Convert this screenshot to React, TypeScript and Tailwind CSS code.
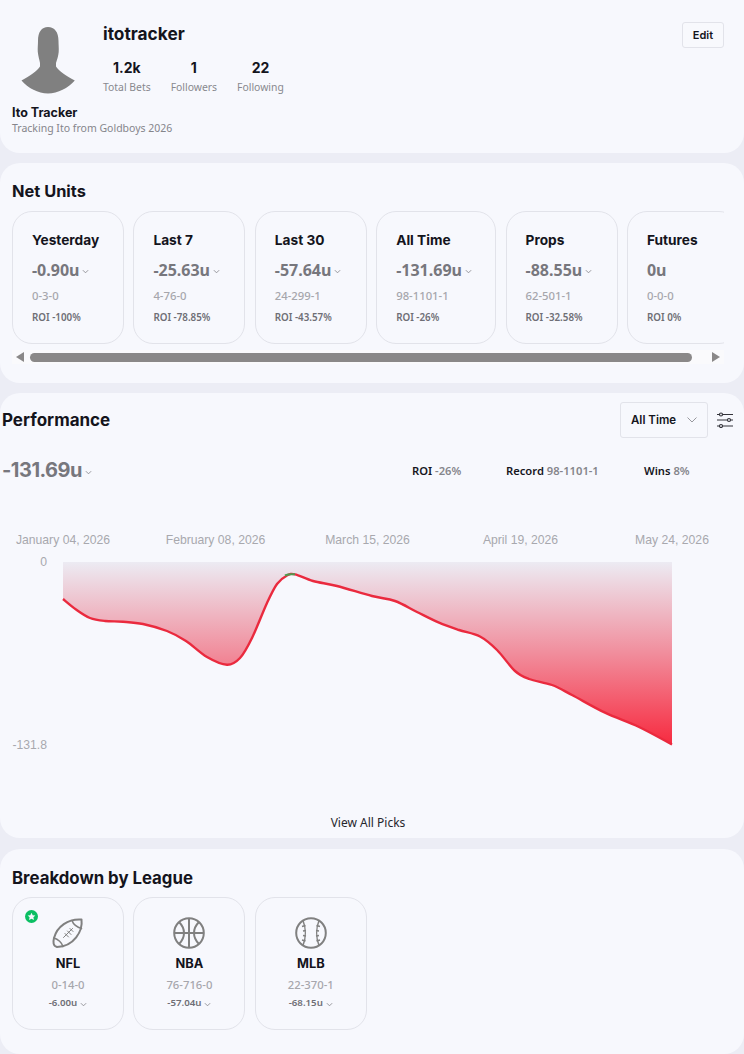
const heading = "font-['Inter',sans-serif] font-bold text-[#14141c]"
const body = "font-['Noto_Sans',sans-serif]"

const netUnits = [
  { label: 'Yesterday', value: '-0.90u', record: '0-3-0', roi: 'ROI -100%', w: 'w-[112px]', caret: true },
  { label: 'Last 7', value: '-25.63u', record: '4-76-0', roi: 'ROI -78.85%', w: 'w-[112px]', caret: true },
  { label: 'Last 30', value: '-57.64u', record: '24-299-1', roi: 'ROI -43.57%', w: 'w-[112px]', caret: true },
  { label: 'All Time', value: '-131.69u', record: '98-1101-1', roi: 'ROI -26%', w: 'w-[120px]', caret: true },
  { label: 'Props', value: '-88.55u', record: '62-501-1', roi: 'ROI -32.58%', w: 'w-[112px]', caret: true },
  { label: 'Futures', value: '0u', record: '0-0-0', roi: 'ROI 0%', w: 'w-[112px]', caret: false },
]

const points: [number, number][] = [
  [63, 599], [76, 609.500], [90, 618], [105, 621], [123, 621.700], [143, 624], [167, 631], [186, 641], [207, 657],
  [227, 664.700], [240, 658], [252, 638], [267, 603], [277, 584], [287, 575.500], [295, 574.300], [313, 581], [337, 586],
  [372, 596], [395, 601], [417, 612], [439, 622.700], [459, 630], [480, 636.500], [497, 650], [515, 671], [529, 679],
  [552, 685], [572, 695], [605, 712.700], [639, 727], [672, 744.500],
]

// catmull-rom through the traced points
function smoothLine(pts: [number, number][]) {
  let d = `M${pts[0][0]} ${pts[0][1]}`
  for (let i = 0; i < pts.length - 1; i++) {
    const p0 = pts[Math.max(i - 1, 0)]
    const p1 = pts[i]
    const p2 = pts[i + 1]
    const p3 = pts[Math.min(i + 2, pts.length - 1)]
    const c1x = p1[0] + (p2[0] - p0[0]) / 6
    const c1y = p1[1] + (p2[1] - p0[1]) / 6
    const c2x = p2[0] - (p3[0] - p1[0]) / 6
    const c2y = p2[1] - (p3[1] - p1[1]) / 6
    d += ` C${c1x} ${c1y} ${c2x} ${c2y} ${p2[0]} ${p2[1]}`
  }
  return d
}

function Caret({ className = '' }: { className?: string }) {
  return (
    <svg viewBox="0 0 8 5" className={`w-[7px] h-[5px] shrink-0 ${className}`} fill="none" stroke="#8a8a90" strokeWidth="1">
      <path d="M1 1l3 3 3-3" />
    </svg>
  )
}

function Avatar() {
  return (
    <svg viewBox="0 0 91 76" className="w-[91px] h-[76px] shrink-0" fill="#808080">
      <path d="M36 5C29.500 5 26 10 26 19C26 23 25.500 26 25.800 30C26.200 34 27.500 38 28 41L28 44.500C25 49 18 54 9.500 58.500C16 66 26 71.500 36 71.500C46 71.500 56 66 62.800 58.500C54 54 47 49 44 44.500L44 41C45 38 46.300 34 46.700 30C47 26 46.500 23 46.500 19C46.500 10 42.500 5 36 5Z" />
    </svg>
  )
}

function FootballIcon() {
  return (
    <svg viewBox="0 0 32 32" className="w-[32px] h-[32px]" fill="none" stroke="#808080" strokeWidth="2" strokeLinecap="round" strokeLinejoin="round">
      <path d="M29.500 2.500C31 14 22 29.500 5 30C1 29 1 25 2 21C5 9.500 16 1.500 29.500 2.500Z" />
      <path d="M20 3.500C21 7 25 10.500 29.500 11.500" strokeWidth="1.500" />
      <path d="M2 21C6 22 10 26 11 29.500" strokeWidth="1.500" />
      <path d="M11.500 20.500L20.500 11.500M13 16.500l3.500 3.500M15.500 14l3.500 3.500M18 11.500l3 3" strokeWidth="1" />
    </svg>
  )
}

function BasketballIcon() {
  return (
    <svg viewBox="0 0 32 32" className="w-[32px] h-[32px]" fill="none" stroke="#808080" strokeWidth="2">
      <circle cx="16" cy="16" r="14.800" />
      <path d="M16 1.200V30.800M1.200 16H30.800" />
      <path d="M6 5C10 9 11 12 11 16C11 20 10 23 6 27M26 5C22 9 21 12 21 16C21 20 22 23 26 27" />
    </svg>
  )
}

function BaseballIcon() {
  return (
    <svg viewBox="0 0 32 32" className="w-[32px] h-[32px]" fill="none" stroke="#808080" strokeWidth="2">
      <circle cx="16" cy="16" r="14.800" />
      <path d="M8 3.500C11 11 11 21 8 28.500M24 3.500C21 11 21 21 24 28.500" strokeWidth="1.500" />
      <path d="M7 9.500l3.500-1M8 14l3-.5M8 18.500l3 .5M7 23l3.500 1M25 9.500l-3.500-1M24 14l-3-.5M24 18.500l-3 .5M25 23l-3.500 1" strokeWidth="1.500" />
    </svg>
  )
}

function Stat({ value, label }: { value: string; label: string }) {
  return (
    <div className="flex flex-col items-center">
      <span className={`${heading} text-[14px] leading-[20px]`}>{value}</span>
      <span className={`${body} text-[10.400px] leading-[16px] mt-[1px] text-[#88888e]`}>{label}</span>
    </div>
  )
}

const leagues = [
  { name: 'NFL', record: '0-14-0', net: '-6.00u', icon: <FootballIcon />, star: true },
  { name: 'NBA', record: '76-716-0', net: '-57.04u', icon: <BasketballIcon />, star: false },
  { name: 'MLB', record: '22-370-1', net: '-68.15u', icon: <BaseballIcon />, star: false },
]

function App() {
  const line = smoothLine(points)
  return (
    <div className="w-[744px] h-[1054px] overflow-hidden bg-[#ecedf5] flex flex-col gap-[10px]">
      <section className="h-[153px] shrink-0 bg-[#f7f8fd] rounded-b-[20px] pl-3 pr-5 pt-[22px]">
        <div className="flex justify-between items-start">
          <div className="flex">
            <Avatar />
            <div>
              <h1 className={`${heading} text-[17.300px] leading-[24px]`}>itotracker</h1>
              <div className="flex gap-[20px] mt-[12px]">
                <Stat value="1.2k" label="Total Bets" />
                <Stat value="1" label="Followers" />
                <Stat value="22" label="Following" />
              </div>
            </div>
          </div>
          <button className={`${heading} text-[11px] font-semibold w-[42px] h-[26px] rounded-[3px] border border-[#e2e3ea] bg-[#f8f9fd]`}>Edit</button>
        </div>
        <div className="mt-[7px]">
          <div className={`${heading} text-[12.500px] leading-[16px]`}>Ito Tracker</div>
          <div className={`${body} text-[10.500px] leading-[15px] text-[#85858b]`}>Tracking Ito from Goldboys 2026</div>
        </div>
      </section>

      <section className="h-[220px] shrink-0 bg-[#f7f8fd] rounded-[20px] px-3 pt-[16px]">
        <h2 className={`${heading} text-[16.400px] leading-[24px]`}>Net Units</h2>
        <div className="mr-2 mt-[8px] overflow-hidden">
          <div className="flex gap-[9.400px] w-max">
            {netUnits.map(card => (
              <div key={card.label} className={`${card.w} h-[133px] shrink-0 rounded-[20px] border border-[#e2e3ea] pl-[19px] pt-[18px]`}>
                <div className={`${heading} text-[13.700px] leading-[20px]`}>{card.label}</div>
                <div className="flex items-center gap-[3px] mt-[9px]">
                  <span className={`${body} text-[16px] leading-[22px] font-bold text-[#77777d]`}>{card.value}</span>
                  {card.caret && <Caret className="mt-[3px]" />}
                </div>
                <div className={`${body} text-[11.300px] leading-[15px] mt-[7px] font-medium text-[#a6a6ac]`}>{card.record}</div>
                <div className={`${body} text-[9.800px] leading-[14px] mt-[8px] font-semibold text-[#6e6e75]`}>{card.roi}</div>
              </div>
            ))}
          </div>
          <div className="h-[14px] mt-[6px] bg-[#fafafc] flex items-center pl-[4px] pr-[4px] gap-[6px]">
            <span className="w-0 h-0 border-y-[5px] border-y-transparent border-r-[8px] border-r-[#8a8888]" />
            <div className="flex-1 h-[9px] rounded-full bg-[#8a8888]" />
            <span className="ml-[14px] w-0 h-0 border-y-[5px] border-y-transparent border-l-[8px] border-l-[#8a8888]" />
          </div>
        </div>
      </section>

      <section className="h-[445px] shrink-0 bg-[#f7f8fd] rounded-[20px] pt-[9px]">
        <div className="flex items-center justify-between pl-[2px] pr-[11px]">
          <h2 className={`${heading} text-[17px] leading-[24px]`}>Performance</h2>
          <div className="flex items-center gap-[9px]">
            <div className={`${heading} text-[11.500px] font-semibold w-[88px] h-[36px] rounded-[3px] border border-[#e2e3ea] flex items-center justify-between pl-[10px] pr-[10px]`}>
              <span className="pt-[2px]">All Time</span>
              <svg viewBox="0 0 10 6" className="w-[10px] h-[6px]" fill="none" stroke="#98989e" strokeWidth="1"><path d="M.5.500L5 5 9.500.500" /></svg>
            </div>
            <svg viewBox="0 0 16 16" className="w-[16px] h-[16px]" fill="none" stroke="#33333a" strokeWidth="1.200">
              <path d="M0 2.500h2.500M5.500 2.500H16M0 8h10.500M13.500 8H16M0 14h2.500M5.500 14H16" />
              <circle cx="4" cy="2.500" r="1.500" />
              <circle cx="12" cy="8" r="1.500" />
              <circle cx="4" cy="14" r="1.500" />
            </svg>
          </div>
        </div>
        <div className="flex items-center mt-[18px] h-[28px] pl-[2px]">
          <div className="flex items-center gap-[3px] w-[410px]">
            <span className={`font-['Inter',sans-serif] text-[20px] leading-[28px] font-bold tracking-[-0.5px] text-[#77777d]`}>-131.69u</span>
            <Caret className="mt-[4px]" />
          </div>
          <div className={`${body} text-[11.200px] font-semibold text-[#16161e] w-[94px] pt-[2px]`}>ROI <span className="text-[#85858b]">-26%</span></div>
          <div className={`${body} text-[11.200px] font-semibold text-[#16161e] w-[138px] pt-[2px]`}>Record <span className="text-[#85858b]">98-1101-1</span></div>
          <div className={`${body} text-[11.200px] font-semibold text-[#16161e] pt-[2px]`}>Wins <span className="text-[#85858b]">8%</span></div>
        </div>
        {/* chart coords are page coords, hence the viewBox offset */}
        <svg viewBox="0 520 744 290" className="block w-[744px] h-[290px] mt-[36px] font-['Liberation_Sans',sans-serif]">
          <defs>
            <linearGradient id="lossFill" x1="0" y1="562" x2="0" y2="745" gradientUnits="userSpaceOnUse">
              <stop offset="0" stopColor="#ecebf3" />
              <stop offset="0.5" stopColor="#f18d9c" />
              <stop offset="1" stopColor="#f72a3f" />
            </linearGradient>
          </defs>
          <g fontSize="12.200" fill="#a8a8ae" textAnchor="middle">
            <text x="63" y="544">January 04, 2026</text>
            <text x="215.500" y="544">February 08, 2026</text>
            <text x="367.500" y="544">March 15, 2026</text>
            <text x="520.500" y="544">April 19, 2026</text>
            <text x="672" y="544">May 24, 2026</text>
          </g>
          <g fontSize="12.200" fill="#a8a8ae" textAnchor="end">
            <text x="47" y="566">0</text>
            <text x="47" y="749">-131.8</text>
          </g>
          <path d={`${line} L672 562 L63 562 Z`} fill="url(#lossFill)" />
          <path d={line} fill="none" stroke="#ea2a3e" strokeWidth="2.400" />
          <path d="M285 575.500C288 574 292 574 295 574.300" fill="none" stroke="#4f9a4f" strokeWidth="2" />
        </svg>
        <div className={`${body} text-center text-[12px] leading-[18px] text-[#26262c] mt-[4px] pr-[8px]`}>View All Picks</div>
      </section>

      <section className="h-[205px] mt-[1px] shrink-0 bg-[#f7f8fd] rounded-[20px] px-3 pt-[17px]">
        <h2 className={`${heading} text-[16.800px] leading-[24px]`}>Breakdown by League</h2>
        <div className="flex gap-[9.400px] mt-[7px]">
          {leagues.map(league => (
            <div key={league.name} className="relative w-[112px] h-[133px] rounded-[20px] border border-[#e2e3ea] flex flex-col items-center pt-[19px]">
              {league.star && (
                <span className="absolute left-[12px] top-[12px] w-[13px] h-[13px] rounded-full bg-[#0bbf63] flex items-center justify-center">
                  <svg viewBox="0 0 10 10" className="w-[9px] h-[9px]" fill="#f7f8fd"><path d="M5 .8l1.300 2.700 3 .4-2.200 2 .6 3L5 7.400 2.300 8.900l.6-3-2.200-2 3-.4z" /></svg>
                </span>
              )}
              {league.icon}
              <div className={`${heading} text-[12.800px] leading-[18px] mt-[6px]`}>{league.name}</div>
              <div className={`${body} text-[11.300px] leading-[15px] mt-[4px] font-medium text-[#a6a6ac]`}>{league.record}</div>
              <div className="flex items-center gap-[3px] mt-[4px]">
                <span className={`${body} text-[9.700px] leading-[14px] font-semibold text-[#6e6e75]`}>{league.net}</span>
                <Caret className="mt-[2px]" />
              </div>
            </div>
          ))}
        </div>
      </section>
    </div>
  )
}

export default App
